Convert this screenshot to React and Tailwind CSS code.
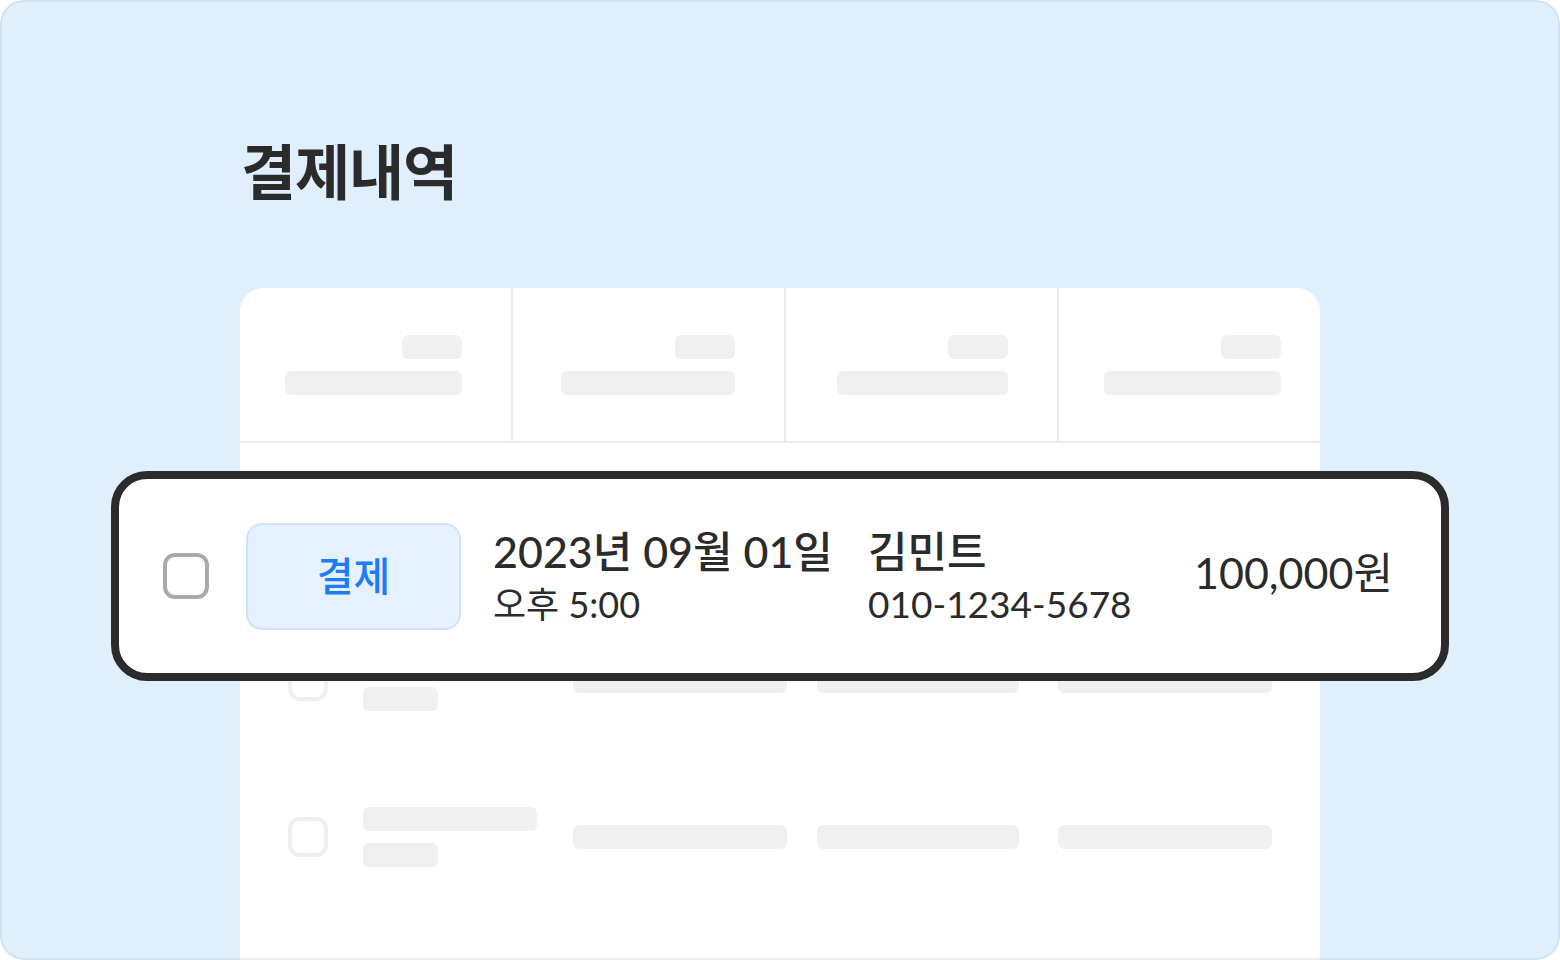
const font = "font-['Lato','Noto_Sans_CJK_KR',sans-serif]";

const headerCols = [
  { big: "w-[177px]", pad: "pr-[49px] border-r-2 border-[#ebebeb]" },
  { big: "w-[174px]", pad: "pr-[49px] border-r-2 border-[#ebebeb]" },
  { big: "w-[171px]", pad: "pr-[49px] border-r-2 border-[#ebebeb]" },
  { big: "w-[177px]", pad: "pr-[39px]" },
];

function GhostRow() {
  return (
    <div className="h-[156px] flex items-center">
      <div className="ml-[48px] w-[40px] h-[40px] rounded-[12px] border-4 border-[#f0f0f0]" />
      <div className="ml-[35px] w-[210px] flex flex-col gap-3">
        <div className="w-[174px] h-[24px] rounded-[6px] bg-[#f0f0f0]" />
        <div className="w-[75px] h-[24px] rounded-[6px] bg-[#f0f0f0]" />
      </div>
      <div className="w-[214px] h-[24px] rounded-[6px] bg-[#f0f0f0]" />
      <div className="ml-[30px] w-[202px] h-[24px] rounded-[6px] bg-[#f0f0f0]" />
      <div className="ml-[39px] w-[214px] h-[24px] rounded-[6px] bg-[#f0f0f0]" />
    </div>
  );
}

export default function App() {
  return (
    <div className={`${font} relative w-[1560px] h-[960px] bg-[#e0effe] rounded-[24px] overflow-hidden flex flex-col text-[#2b2b2b]`}>
      {/* Title */}
      <div className="h-[288px] pl-[241px] pt-[132px]">
        <h1 className="text-[60px] leading-[80px] font-bold tracking-[-0.02em]">결제내역</h1>
      </div>

      {/* Table skeleton */}
      <div className="ml-[240px] w-[1080px] flex-1 bg-white rounded-t-[24px]">
        <div className="grid grid-cols-[273px_273px_273px_261px] h-[155px] border-b-2 border-[#ebebeb]">
          {headerCols.map((c, i) => (
            <div key={i} className={`flex flex-col items-end justify-center gap-3 ${c.pad}`}>
              <div className="w-[60px] h-[24px] rounded-[6px] bg-[#f0f0f0]" />
              <div className={`${c.big} h-[24px] rounded-[6px] bg-[#f0f0f0]`} />
            </div>
          ))}
        </div>
        <div className="pt-[4px]">
          <GhostRow />
          <GhostRow />
          <GhostRow />
        </div>
      </div>

      {/* Highlighted row */}
      <div className="absolute left-[111px] top-[471px] w-[1338px] h-[210px] bg-white border-[8px] border-[#2b2b2b] rounded-[36px] flex items-center pl-[44px] pr-[48px]">
        <div className="w-[46px] h-[46px] rounded-[12px] border-4 border-[#aaaaaa]" />
        <div className="ml-[37px] w-[215px] h-[107px] rounded-[16px] bg-[#e6f1ff] border-2 border-[#cfe3ff] flex items-center justify-center text-[40px] font-medium text-[#1f7cf6]">
          결제
        </div>
        <div className="ml-[32px] w-[375px] flex flex-col">
          <span className="text-[43px] leading-[50px] font-medium">2023년 09월 01일</span>
          <span className="mt-[6px] text-[36px] leading-[42px]">오후 5:00</span>
        </div>
        <div className="flex flex-col">
          <span className="text-[43px] leading-[50px] font-medium">김민트</span>
          <span className="mt-[6px] text-[37px] leading-[42px]">010-1234-5678</span>
        </div>
        <div className="ml-auto mb-[6px] text-[43px] leading-[50px]">100,000원</div>
      </div>

      {/* Frame border */}
      <div className="absolute inset-0 rounded-[24px] border-2 border-[rgba(0,40,90,0.07)] pointer-events-none" />
    </div>
  );
}
